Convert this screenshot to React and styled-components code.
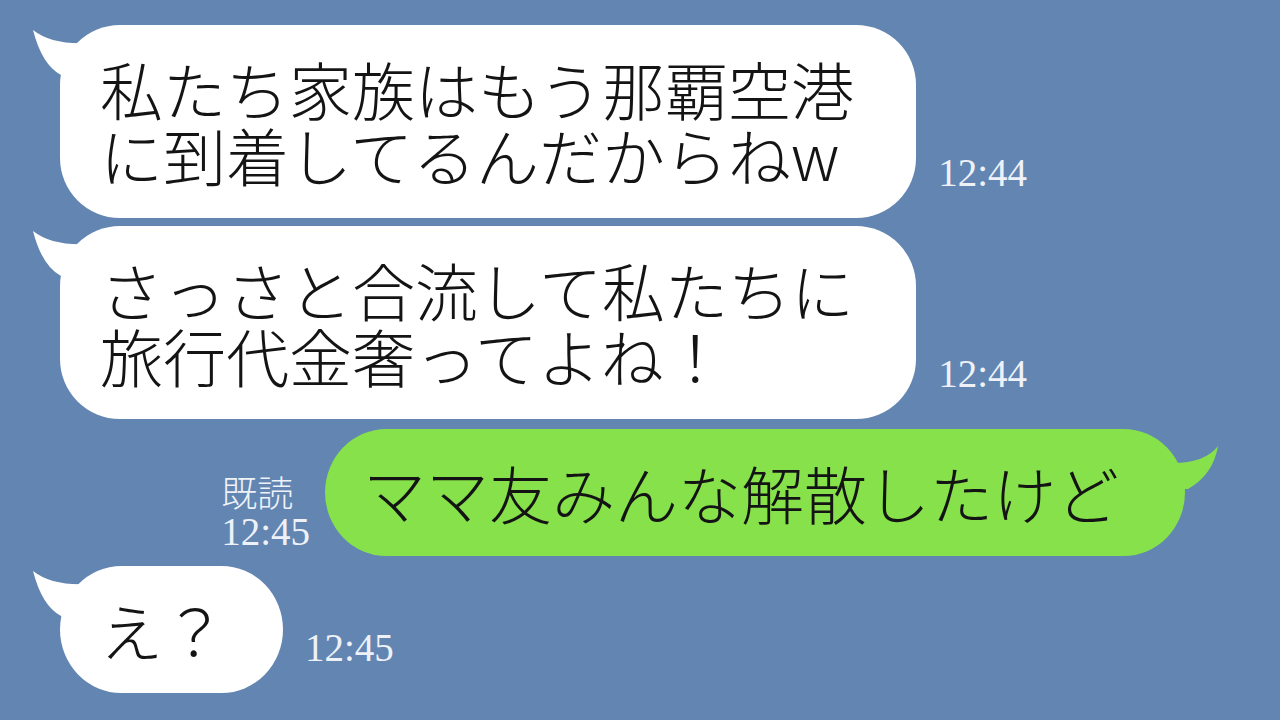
import React from "react";
import styled, { createGlobalStyle } from "styled-components";

//css
const GlobalStyle = createGlobalStyle`
  html, body {
    margin: 0;
    padding: 0;
    background: #6285b2;
  }
`;

const Page = styled.div`
  width: 1280px;
  height: 720px;
  overflow: hidden;
  background: #6285b2;
  display: flex;
  flex-direction: column;
  padding-top: 25px;
  box-sizing: border-box;
  font-family: "Noto Sans CJK JP", "Noto Sans", sans-serif;
`;

const Row = styled.div`
  display: flex;
  align-items: flex-end;
  justify-content: ${(p) => (p.mine ? "flex-end" : "flex-start")};
  padding: ${(p) => (p.mine ? "0 95px 0 0" : "0 0 0 60px")};
  gap: ${(p) => (p.mine ? "15px" : "22px")};
  margin-bottom: ${(p) => p.spacing || 8}px;
`;

const Bubble = styled.div`
  position: relative;
  background: ${(p) => (p.mine ? "#86e14b" : "#ffffff")};
  color: #141414;
  font-size: 63px;
  font-weight: 300;
  line-height: 66px;
  white-space: pre-line;
  padding: 30px ${(p) => p.padRight || 62}px 31px ${(p) => (p.mine ? 38 : 40)}px;
  border-radius: ${(p) => (p.tall ? "60px" : "62px / 64px")};
`;

const Tail = styled.svg`
  position: absolute;
  top: 0;
  width: 60px;
  height: 70px;
  ${(p) => (p.mine ? "right: -36px;" : "left: -30px;")}
`;

const Time = styled.div`
  font-family: "Liberation Serif", "DejaVu Serif", serif;
  font-size: 39px;
  line-height: 38px;
  color: #eef2f8;
  margin-bottom: 26px;
  white-space: nowrap;
`;

const ReadMark = styled.div`
  display: flex;
  flex-direction: column;
  color: #eef2f8;
  margin-bottom: 3px;
`;

const ReadLabel = styled.span`
  font-family: "Noto Sans CJK JP", sans-serif;
  font-size: 36px;
  font-weight: 300;
  line-height: 40px;
`;

const ReadTime = styled.span`
  font-family: "Liberation Serif", "DejaVu Serif", serif;
  font-size: 39px;
  line-height: 42px;
`;

const LeftTail = () => (
  <Tail viewBox="0 0 60 70">
    <path d="M3 5 Q22 20 58 18 L58 62 L31 50 Q12 40 3 5 Z" fill="#ffffff" />
  </Tail>
);

const RightTail = () => (
  <Tail mine viewBox="0 0 60 70">
    <path d="M57 17 Q44 34 12 34 L0 34 L0 60 L27 60 Q52 46 57 17 Z" fill="#86e14b" />
  </Tail>
);

const App = () => {
  return (
    <>
      <GlobalStyle />
      <Page>
        <Row>
          <Bubble tall>
            <LeftTail />
            {"私たち家族はもう那覇空港\nに到着してるんだからねw"}
          </Bubble>
          <Time>12:44</Time>
        </Row>
        <Row spacing={10}>
          <Bubble tall>
            <LeftTail />
            {"さっさと合流して私たちに\n旅行代金奢ってよね！"}
          </Bubble>
          <Time>12:44</Time>
        </Row>
        <Row mine spacing={10}>
          <ReadMark>
            <ReadLabel>既読</ReadLabel>
            <ReadTime>12:45</ReadTime>
          </ReadMark>
          <Bubble mine padRight={66}>
            <RightTail />
            ママ友みんな解散したけど
          </Bubble>
        </Row>
        <Row>
          <Bubble padRight={57}>
            <LeftTail />
            え？
          </Bubble>
          <Time>12:45</Time>
        </Row>
      </Page>
    </>
  );
};

export default App;
